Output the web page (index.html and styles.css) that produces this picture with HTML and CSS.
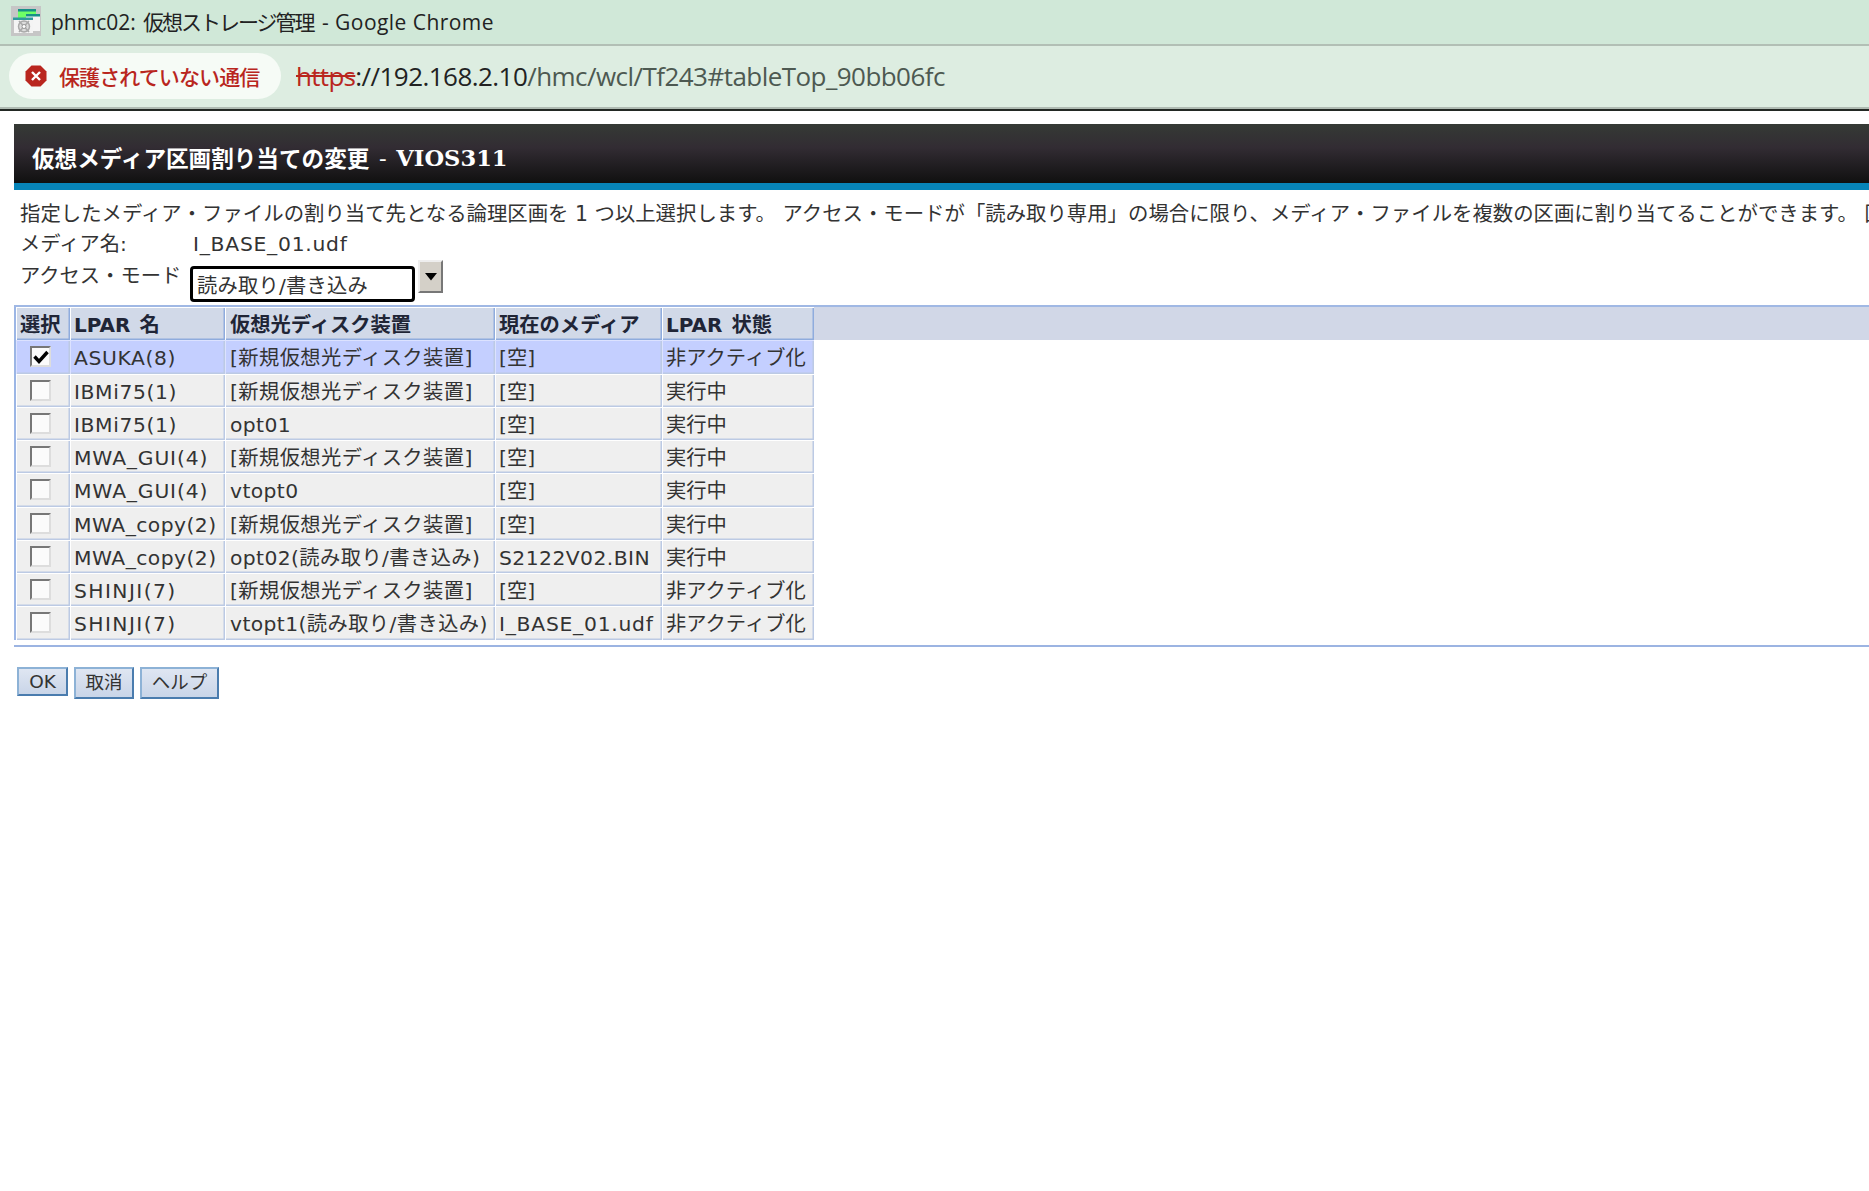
FILE: index.html
```html
<!DOCTYPE html>
<html lang="ja">
<head>
<meta charset="UTF-8">
<title>phmc02: 仮想ストレージ管理</title>
<link rel="stylesheet" href="styles.css">
</head>
<body>
<div class="titlebar">
	<svg class="favicon" width="30" height="30" viewBox="0 0 30 30">
		<rect width="30" height="30" fill="#c6c6c6"/>
		<rect x="7" y="3" width="18" height="10" fill="#6fff66"/>
		<rect x="7" y="3" width="18" height="2.5" fill="#179087"/>
		<rect x="15" y="8" width="14" height="17" fill="#f5f5f5"/>
		<rect x="15" y="8" width="14" height="2.5" fill="#179087"/>
		<rect x="3" y="12" width="19" height="15" fill="#f4f4f4"/>
		<rect x="2" y="11.500" width="20" height="2.500" fill="#2d9a9b"/>
		<circle cx="13" cy="20.500" r="5.500" fill="#dcdcdc" stroke="#aaa" stroke-width="1.500"/>
		<path d="M8 15l10 11M18 15L8 26" stroke="#aaa" stroke-width="1.600"/>
		<circle cx="13" cy="20.500" r="2" fill="#fff" stroke="#999"/>
	</svg>
	<span class="t1">phmc02:</span><span class="t2">仮想ストレージ管理</span><span class="t3">- Google Chrome</span>
</div>
<div class="addressbar">
	<div class="insecure">
		<svg width="22" height="22" viewBox="0 0 22 22">
			<path d="M6.500 .5h9l6 6v9l-6 6h-9l-6-6v-9z" fill="#b9261e"/>
			<path d="M7 7l8 8M15 7l-8 8" stroke="#fff" stroke-width="2.400"/>
		</svg>
		<span>保護されていない通信</span>
	</div>
	<div class="url"><span class="scheme">https</span><span class="host">://192.168.2.10</span><span class="path">/hmc/wcl/Tf243#tableTop_90bb06fc</span></div>
</div>

<div class="page">
	<h1 class="banner"><span class="ja">仮想メディア区画割り当ての変更</span><span class="dash">-</span><span>VIOS311</span></h1>
	<p class="desc">指定したメディア・ファイルの割り当て先となる論理区画を 1 つ以上選択します。 アクセス・モードが「読み取り専用」の場合に限り、メディア・ファイルを複数の区画に割り当てることができます。 区</p>
	<div class="field">
		<label>メディア名:</label>
		<span class="file">I_BASE_01.udf</span>
	</div>
	<div class="field mode">
		<label>アクセス・モード</label>
		<div class="combo">読み取り/書き込み</div>
		<button type="button" class="drop"><svg width="14" height="8" viewBox="0 0 14 8"><path d="M1 0h12L7 7.500z" fill="#000"/></svg></button>
	</div>

	<div class="tablebox">
	<table>
		<colgroup><col class="c1"><col class="c2"><col class="c3"><col class="c4"><col class="c5"></colgroup>
		<tr><th>選択</th><th><b>LPAR</b> 名</th><th>仮想光ディスク装置</th><th>現在のメディア</th><th><b>LPAR</b> 状態</th></tr>
		<tr class="selected"><td><i class="check"><svg width="16" height="16" viewBox="0 0 16 16"><path d="M1.500 7.500L6 12.500 14.500 3" fill="none" stroke="#000" stroke-width="3.400"/></svg></i></td><td><span class="w">ASUKA(8)</span></td><td>[新規仮想光ディスク装置]</td><td>[空]</td><td>非アクティブ化</td></tr>
		<tr><td><i class="check"></i></td><td><span class="w">IBMi75(1)</span></td><td>[新規仮想光ディスク装置]</td><td>[空]</td><td>実行中</td></tr>
		<tr><td><i class="check"></i></td><td><span class="w">IBMi75(1)</span></td><td>opt01</td><td>[空]</td><td>実行中</td></tr>
		<tr><td><i class="check"></i></td><td><span class="g">MWA_GUI(4)</span></td><td>[新規仮想光ディスク装置]</td><td>[空]</td><td>実行中</td></tr>
		<tr><td><i class="check"></i></td><td><span class="g">MWA_GUI(4)</span></td><td>vtopt0</td><td>[空]</td><td>実行中</td></tr>
		<tr><td><i class="check"></i></td><td><span class="n">MWA_copy(2)</span></td><td>[新規仮想光ディスク装置]</td><td>[空]</td><td>実行中</td></tr>
		<tr><td><i class="check"></i></td><td><span class="n">MWA_copy(2)</span></td><td>opt02(読み取り/書き込み)</td><td><span class="n">S2122V02.BIN</span></td><td>実行中</td></tr>
		<tr><td><i class="check"></i></td><td><span class="s">SHINJI(7)</span></td><td>[新規仮想光ディスク装置]</td><td>[空]</td><td>非アクティブ化</td></tr>
		<tr><td><i class="check"></i></td><td><span class="s">SHINJI(7)</span></td><td>vtopt1(読み取り/書き込み)</td><td><span class="file">I_BASE_01.udf</span></td><td>非アクティブ化</td></tr>
	</table>
	</div>

	<div class="buttons">
		<button type="button" class="ok">OK</button>
		<button type="button" class="cancel">取消</button>
		<button type="button" class="help">ヘルプ</button>
	</div>
</div>
</body>
</html>
```

FILE: styles.css
```css
* {
	box-sizing: border-box;
}
body {
	margin: 0;
	background: #fff;
	color: #333;
	font: 20.3px "DejaVu Sans", "Noto Sans CJK JP", sans-serif;
	overflow: hidden;
	white-space: nowrap;
}

/* browser window */
.titlebar {
	height: 46px;
	padding: 0 0 2px 11px;
	display: flex;
	align-items: center;
	background: #d0e8d8;
	border-bottom: 2px solid #b2bfb5;
	font-family: "Open Sans", "Noto Sans CJK JP", sans-serif;
	font-size: 21px;
	line-height: 30px;
	color: #222;
}
.titlebar span {
	padding-top: 2px;
}
.favicon {
	margin-right: 10px;
	flex: none;
}
.t1 {
	width: 92px;
}
.t2 {
	width: 179px;
	letter-spacing: -2px;
}
.t3 {
	letter-spacing: .45px;
}
.addressbar {
	height: 65px;
	padding: 7px 0 0 9px;
	display: flex;
	background: #ddede1;
	border-bottom: 2px solid #222823;
	box-shadow: inset 0 -2px 0 #afbbb2;
	font-family: "Open Sans", "Noto Sans CJK JP", sans-serif;
}
.insecure {
	width: 272px;
	height: 46px;
	padding-left: 16px;
	display: flex;
	align-items: center;
	border-radius: 23px;
	background: #f6fbf6;
	color: #b9261e;
	font-size: 21px;
	font-weight: 500;
	letter-spacing: -.9px;
}
.insecure svg {
	margin-right: 12px;
}
.url {
	margin-left: 15px;
	font-size: 26px;
	line-height: 46px;
}
.scheme {
	color: #b9261e;
	text-decoration: line-through;
	letter-spacing: -.7px;
}
.host {
	color: #222;
	letter-spacing: -.55px;
}
.path {
	color: #4d5951;
	letter-spacing: -.55px;
}

/* page */
.page {
	padding: 13px 0 0 14px;
}
.banner {
	margin: 0;
	height: 66px;
	padding: 8px 0 0 18px;
	display: flex;
	align-items: center;
	background: linear-gradient(#353a35, #322c33 40%, #101010);
	border-bottom: 7px solid #0784b8;
	color: #fff;
	font: bold 22.6px "DejaVu Serif", "Noto Sans CJK JP", serif;
}
.banner .dash {
	width: 27px;
	text-align: center;
	font-weight: normal;
}
.desc {
	margin: 9px 0 -1px 6px;
	line-height: 31px;
	font-size: 20.4px;
}
.field {
	display: flex;
	height: 31px;
	padding-left: 6px;
	line-height: 31px;
	font-size: 20.3px;
}
.field label {
	width: 173px;
}
.file {
	letter-spacing: .75px;
}
.mode {
	height: 45px;
}
.mode label {
	width: 170px;
	padding-top: 1px;
}
.combo {
	width: 225px;
	height: 36px;
	margin: 6px 3px 0 0;
	padding-left: 4px;
	border: 3px solid #000;
	border-radius: 4px;
	line-height: 34px;
	font-size: 20.3px;
	letter-spacing: .2px;
}
.drop {
	width: 25px;
	height: 33px;
	padding: 0;
	background: #d4d0c8;
	border: 2px solid;
	border-color: #eee #777 #777 #eee;
}
.tablebox {
	height: 342px;
	border-top: 2px solid #a0b8e4;
	border-bottom: 2px solid #9cb4e2;
	background: linear-gradient(#d1d7e7 33px, #fff 33px);
}
table {
	width: 800px;
	table-layout: fixed;
	border-collapse: separate;
	border-spacing: 0;
	border-left: 2px solid #9cb6e5;
}
.c1 { width: 54px; }
.c2 { width: 155px; }
.c3 { width: 270px; }
.c4 { width: 167px; }
.c5 { width: 152px; }
th, td {
	height: 33.25px;
	padding: 2px 0 0 3px;
	border: solid #fff;
	border-width: 1px 0 0 1px;
	box-shadow: inset -1.500px -1.500px 0 #bccae4;
	background: #efefef;
	line-height: 30px;
	text-align: left;
}
th:nth-child(3), td:nth-child(3) {
	padding-left: 4px;
}
td:nth-child(3) {
	letter-spacing: .4px;
}
th {
	background: #d1d9e8;
	box-shadow: inset -1.500px -1.500px 0 #8facdd;
	color: #202536;
}
th b {
	font-size: 20px;
	margin-right: 2px;
}
.selected td {
	background: #c4cfff;
	border-color: #dce2ff;
}
td:first-child {
	padding-left: 13px;
}
.w {
	letter-spacing: .6px;
}
.g {
	letter-spacing: .85px;
}
.s {
	letter-spacing: 1.4px;
}
.n {
	letter-spacing: .45px;
}
.check {
	display: block;
	width: 21px;
	height: 21px;
	margin-top: -3px;
	padding: 1px;
	background: #fbfbfb;
	border: 2px solid;
	border-color: #777 #ddd #ddd #777;
}
.check svg {
	display: block;
}
.buttons {
	display: flex;
	align-items: flex-start;
	gap: 6px;
	padding: 20px 0 0 3px;
}
.buttons button {
	height: 32px;
	padding: 0;
	background: linear-gradient(#dfe6f2, #c9d5e8);
	border: 2px solid;
	border-color: #8db2d6 #4a7cae #4a7cae #8db2d6;
	color: #333;
	font: 18.5px "DejaVu Sans", "Noto Sans CJK JP", sans-serif;
	line-height: 28px;
}
.buttons .ok {
	width: 51px;
	height: 29px;
	line-height: 23px;
}
.buttons .cancel {
	width: 60px;
}
.buttons .help {
	width: 79px;
}
```
